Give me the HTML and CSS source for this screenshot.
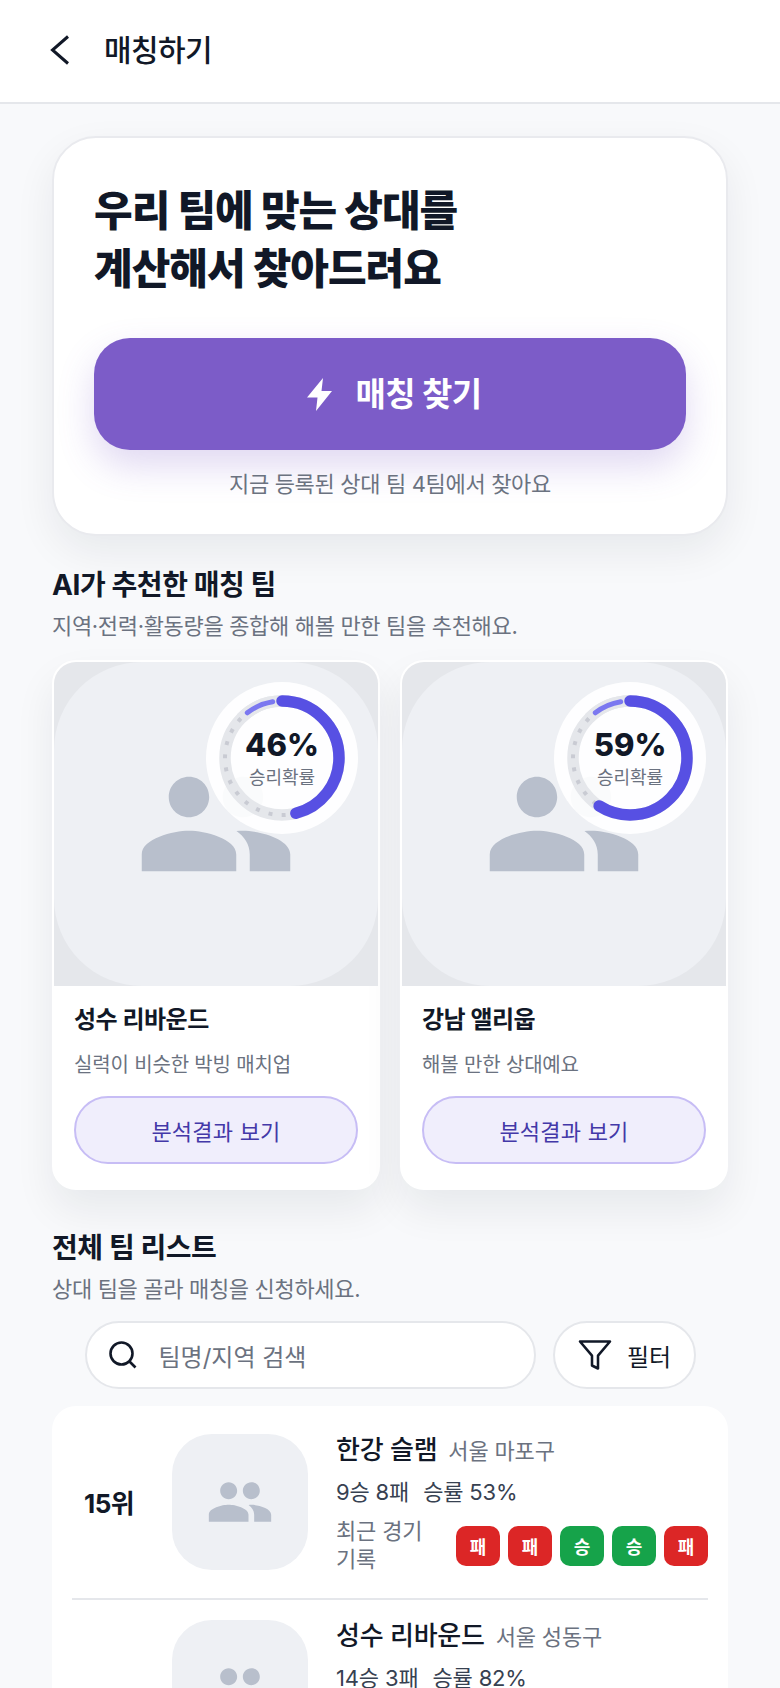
FILE: index.html
```html
<!DOCTYPE html>
<html lang="ko">
<head>
<meta charset="utf-8">
<title>매칭하기</title>
<link rel="stylesheet" href="styles.css">
</head>
<body>
<div class="app">
  <header class="topbar">
    <svg class="back-icon" viewBox="0 0 20 30" aria-hidden="true"><polyline points="18,1.5 2.5,15 18,28.5"/></svg>
    <h1 class="topbar-title">매칭하기</h1>
  </header>
  <main class="content">
    <section class="hero">
      <h2 class="hero-title">우리 팀에 맞는 상대를<br>계산해서 찾아드려요</h2>
      <button class="cta" type="button">
        <svg class="cta-icon" viewBox="0 0 25 33" aria-hidden="true"><polygon points="16,0 0,19.5 10.5,19.5 9,33 25,13 14.5,13"/></svg>
        <span>매칭 찾기</span>
      </button>
      <p class="hero-note">지금 등록된 상대 팀 4팀에서 찾아요</p>
    </section>

    <section class="section-recommend">
      <h2 class="section-title">AI가 추천한 매칭 팀</h2>
      <p class="section-sub">지역·전력·활동량을 종합해 해볼 만한 팀을 추천해요.</p>
      <div class="rec-grid">
        <article class="rec-card">
          <div class="rec-media">
            <div class="rec-plate">
              <svg class="group-icon" viewBox="0 0 24 24" aria-hidden="true"><path d="M16 11c1.66 0 2.99-1.34 2.99-3S17.66 5 16 5c-1.66 0-3 1.34-3 3s1.34 3 3 3zm-8 0c1.66 0 2.99-1.34 2.99-3S9.66 5 8 5C6.34 5 5 6.34 5 8s1.34 3 3 3zm0 2c-2.33 0-7 1.17-7 3.5V19h14v-2.5c0-2.33-4.67-3.5-7-3.5zm8 0c-.29 0-.62.02-.97.05 1.16.84 1.97 1.97 1.97 3.45V19h6v-2.5c0-2.33-4.67-3.5-7-3.5z"/></svg>
            </div>
            <div class="gauge">
              <svg class="gauge-svg" viewBox="0 0 152 152" aria-hidden="true">
                <circle class="g-track" cx="76" cy="76" r="57"/>
                <circle class="g-dots" cx="76" cy="76" r="57"/>
                <circle class="g-cover" cx="76" cy="76" r="57"/>
                <circle class="g-accent" cx="76" cy="76" r="57"/>
                <circle class="g-value g-46" cx="76" cy="76" r="57"/>
              </svg>
              <div class="gauge-text">
                <strong class="gauge-num">46%</strong>
                <span class="gauge-label">승리확률</span>
              </div>
            </div>
          </div>
          <div class="rec-body">
            <h3 class="rec-name">성수 리바운드</h3>
            <p class="rec-desc">실력이 비슷한 박빙 매치업</p>
            <button class="rec-btn" type="button">분석결과 보기</button>
          </div>
        </article>
        <article class="rec-card">
          <div class="rec-media">
            <div class="rec-plate">
              <svg class="group-icon" viewBox="0 0 24 24" aria-hidden="true"><path d="M16 11c1.66 0 2.99-1.34 2.99-3S17.66 5 16 5c-1.66 0-3 1.34-3 3s1.34 3 3 3zm-8 0c1.66 0 2.99-1.34 2.99-3S9.66 5 8 5C6.34 5 5 6.34 5 8s1.34 3 3 3zm0 2c-2.33 0-7 1.17-7 3.5V19h14v-2.5c0-2.33-4.67-3.5-7-3.5zm8 0c-.29 0-.62.02-.97.05 1.16.84 1.97 1.97 1.97 3.45V19h6v-2.5c0-2.33-4.67-3.5-7-3.5z"/></svg>
            </div>
            <div class="gauge">
              <svg class="gauge-svg" viewBox="0 0 152 152" aria-hidden="true">
                <circle class="g-track" cx="76" cy="76" r="57"/>
                <circle class="g-dots" cx="76" cy="76" r="57"/>
                <circle class="g-cover" cx="76" cy="76" r="57"/>
                <circle class="g-accent" cx="76" cy="76" r="57"/>
                <circle class="g-value g-59" cx="76" cy="76" r="57"/>
              </svg>
              <div class="gauge-text">
                <strong class="gauge-num">59%</strong>
                <span class="gauge-label">승리확률</span>
              </div>
            </div>
          </div>
          <div class="rec-body">
            <h3 class="rec-name">강남 앨리웁</h3>
            <p class="rec-desc">해볼 만한 상대예요</p>
            <button class="rec-btn" type="button">분석결과 보기</button>
          </div>
        </article>
      </div>
    </section>

    <section class="section-list">
      <h2 class="section-title">전체 팀 리스트</h2>
      <p class="section-sub">상대 팀을 골라 매칭을 신청하세요.</p>
      <div class="search-row">
        <div class="search-box">
          <svg class="search-icon" viewBox="0 0 28 28" aria-hidden="true"><circle cx="12.5" cy="12.5" r="11"/><line x1="20.5" y1="20.5" x2="26.5" y2="26.5"/></svg>
          <span class="search-placeholder">팀명/지역 검색</span>
        </div>
        <button class="filter-btn" type="button">
          <svg class="filter-icon" viewBox="0 0 24 24" aria-hidden="true"><polygon points="22 3 2 3 10 12.46 10 19 14 21 14 12.46 22 3"/></svg>
          <span>필터</span>
        </button>
      </div>
      <div class="team-panel">
        <div class="team-row">
          <div class="team-rank">15위</div>
          <div class="team-thumb"><svg class="team-icon" viewBox="0 0 24 24" aria-hidden="true"><path d="M16 11c1.66 0 2.99-1.34 2.99-3S17.66 5 16 5c-1.66 0-3 1.34-3 3s1.34 3 3 3zm-8 0c1.66 0 2.99-1.34 2.99-3S9.66 5 8 5C6.34 5 5 6.34 5 8s1.34 3 3 3zm0 2c-2.33 0-7 1.17-7 3.5V19h14v-2.5c0-2.33-4.67-3.5-7-3.5zm8 0c-.29 0-.62.02-.97.05 1.16.84 1.97 1.97 1.97 3.45V19h6v-2.5c0-2.33-4.67-3.5-7-3.5z"/></svg></div>
          <div class="team-info">
            <div class="team-head"><span class="team-name">한강 슬램</span><span class="team-area">서울 마포구</span></div>
            <div class="team-stats"><span>9승 8패</span><span>승률 53%</span></div>
            <div class="team-recent">
              <span class="recent-label">최근 경기 기록</span>
              <div class="badges"><span class="badge lose">패</span><span class="badge lose">패</span><span class="badge win">승</span><span class="badge win">승</span><span class="badge lose">패</span></div>
            </div>
          </div>
        </div>
        <div class="team-row">
          <div class="team-rank"></div>
          <div class="team-thumb"><svg class="team-icon" viewBox="0 0 24 24" aria-hidden="true"><path d="M16 11c1.66 0 2.99-1.34 2.99-3S17.66 5 16 5c-1.66 0-3 1.34-3 3s1.34 3 3 3zm-8 0c1.66 0 2.99-1.34 2.99-3S9.66 5 8 5C6.34 5 5 6.34 5 8s1.34 3 3 3zm0 2c-2.33 0-7 1.17-7 3.5V19h14v-2.5c0-2.33-4.67-3.5-7-3.5zm8 0c-.29 0-.62.02-.97.05 1.16.84 1.97 1.97 1.97 3.45V19h6v-2.5c0-2.33-4.67-3.5-7-3.5z"/></svg></div>
          <div class="team-info">
            <div class="team-head"><span class="team-name">성수 리바운드</span><span class="team-area">서울 성동구</span></div>
            <div class="team-stats"><span>14승 3패</span><span>승률 82%</span></div>
          </div>
        </div>
      </div>
    </section>
  </main>
</div>
</body>
</html>
```

FILE: styles.css
```css
* { box-sizing: border-box; }
html, body { margin: 0; padding: 0; }
body {
  background: #f8f9fb;
  color: #111827;
  font-family: Inter, "Noto Sans CJK KR", sans-serif;
  letter-spacing: -0.01em;
}
h1, h2, h3, p { margin: 0; }
button { font-family: inherit; letter-spacing: inherit; cursor: pointer; }

.app { height: 100vh; overflow: hidden; }

.topbar {
  height: 104px;
  display: flex;
  align-items: center;
  gap: 34px;
  padding: 0 0 2px 50px;
  background: #fff;
  border-bottom: 2px solid #e5e7eb;
}
.back-icon { width: 20px; height: 30px; fill: none; stroke: #111827; stroke-width: 3; }
.topbar-title { font-size: 30px; font-weight: 500; letter-spacing: -0.02em; line-height: 1.2; }

.content { padding: 32px 52px 0; }

.hero {
  background: #fff;
  border: 2px solid #e9eaee;
  border-radius: 44px;
  padding: 44px 40px 0;
  height: 400px;
  box-shadow: 0 16px 40px rgba(17, 24, 39, 0.07);
}
.hero-title { font-size: 42px; font-weight: 800; line-height: 58px; letter-spacing: -0.024em; color: #111827; }
.cta {
  margin-top: 40px;
  width: 100%;
  height: 112px;
  display: flex;
  align-items: center;
  justify-content: center;
  gap: 24px;
  padding: 0 0 0 8px;
  border: 0;
  border-radius: 36px;
  background: #7c5cc8;
  color: #fff;
  font-size: 33px;
  font-weight: 700;
  letter-spacing: -0.02em;
  box-shadow: 0 16px 36px rgba(124, 92, 200, 0.24);
}
.cta span { margin-top: -4px; }
.cta-icon { width: 25px; height: 33px; fill: #fff; }
.hero-note { margin-top: 17px; text-align: center; font-size: 22px; line-height: 34px; letter-spacing: -0.015em; color: #6b7280; }

.section-recommend { margin-top: 30px; }
.section-title { font-size: 28px; font-weight: 700; line-height: 38px; letter-spacing: -0.015em; color: #111827; }
.section-sub { margin-top: 6px; font-size: 22px; line-height: 32px; color: #6b7280; letter-spacing: -0.015em; }

.rec-grid { margin-top: 18px; display: grid; grid-template-columns: 1fr 1fr; gap: 20px; }
.rec-card {
  background: #fff;
  border: 2px solid #fff;
  border-radius: 24px;
  height: 530px;
  box-shadow: 0 20px 40px rgba(17, 24, 39, 0.07);
  overflow: hidden;
}
.rec-media { position: relative; height: 324px; background: #e5e7eb; }
.rec-plate {
  height: 100%;
  display: flex;
  align-items: center;
  justify-content: center;
  background: #eef0f4;
  border-radius: 88px;
}
.group-icon { width: 162px; height: 162px; fill: #b8bfcc; }

.gauge {
  position: absolute;
  top: 20px;
  right: 20px;
  width: 152px;
  height: 152px;
  border-radius: 50%;
  background: rgba(255, 255, 255, 0.93);
}
.gauge-svg { position: absolute; inset: 0; width: 100%; height: 100%; transform: rotate(-90deg); fill: none; }
.g-track { stroke: #e5e7eb; stroke-width: 11.5; }
.g-dots { stroke: #c9cbd3; stroke-width: 4; stroke-dasharray: 4 9.264; stroke-dashoffset: -2.7; }
.g-cover { stroke: #e5e7eb; stroke-width: 11.5; stroke-dasharray: 48 310.1; stroke-dashoffset: 46; }
.g-accent { stroke: #7b78f0; stroke-width: 5; stroke-linecap: round; stroke-dasharray: 27.9 330.2; stroke-dashoffset: 37.8; }
.g-value { stroke: #5750e3; stroke-width: 11.5; stroke-linecap: round; }
.g-46 { stroke-dasharray: 164.7 358.1; }
.g-59 { stroke-dasharray: 211.3 358.1; }
.gauge-text {
  position: absolute;
  inset: 0;
  display: flex;
  flex-direction: column;
  align-items: center;
  justify-content: center;
}
.gauge-num { font-size: 31px; font-weight: 800; line-height: 38px; letter-spacing: 0; color: #111827; }
.gauge-label { margin-top: 2px; font-size: 18px; line-height: 24px; letter-spacing: 0; color: #6b7280; }

.rec-body { padding: 16px 20px 0; }
.rec-name { font-size: 24px; font-weight: 700; line-height: 36px; letter-spacing: -0.02em; color: #111827; }
.rec-desc { margin-top: 12px; font-size: 20px; line-height: 30px; color: #6b7280; }
.rec-btn {
  margin-top: 16px;
  width: 100%;
  height: 68px;
  background: #f0eefc;
  border: 2px solid #c7bdf5;
  border-radius: 34px;
  color: #4338a8;
  font-size: 22px;
  font-weight: 400;
  letter-spacing: 0.01em;
}

.section-list { margin-top: 39px; }
.search-row { margin-top: 16px; display: flex; justify-content: center; align-items: center; gap: 17px; }
.search-box {
  width: 451px;
  height: 68px;
  display: flex;
  align-items: center;
  gap: 22px;
  padding-left: 22px;
  background: #fff;
  border: 2px solid #e5e7eb;
  border-radius: 34px;
}
.search-icon { width: 28px; height: 28px; fill: none; stroke: #111827; stroke-width: 2.6; }
.search-placeholder { font-size: 24px; letter-spacing: 0; color: #6b7280; }
.filter-btn {
  width: 143px;
  height: 68px;
  display: flex;
  align-items: center;
  justify-content: center;
  gap: 14px;
  background: #fff;
  border: 2px solid #e5e7eb;
  border-radius: 34px;
  color: #111827;
  font-size: 24px;
}
.filter-icon { width: 36px; height: 36px; fill: none; stroke: #111827; stroke-width: 1.7; stroke-linejoin: round; }

.team-panel { margin-top: 17px; padding: 8px 20px; background: #fff; border-radius: 24px; }
.team-row {
  display: grid;
  grid-template-columns: 100px 136px 1fr;
  column-gap: 0;
  padding: 20px 0 25px;
  border-bottom: 2px solid #e5e7eb;
}
.team-row:last-child { border-bottom: 0; }
.team-rank { padding-left: 12px; margin-bottom: 4px; align-self: center; font-size: 26px; font-weight: 700; letter-spacing: -0.02em; color: #111827; }
.team-thumb {
  width: 136px;
  height: 136px;
  display: flex;
  align-items: center;
  justify-content: center;
  background: #eef0f4;
  border-radius: 40px;
}
.team-icon { width: 68px; height: 68px; fill: #b8bfcc; }
.team-info { margin-left: 28px; min-width: 0; }
.team-head { display: flex; align-items: baseline; gap: 11px; height: 32px; line-height: 32px; }
.team-name { font-size: 26px; font-weight: 500; letter-spacing: -0.01em; color: #111827; }
.team-area { font-size: 22px; color: #6b7280; }
.team-stats { margin-top: 10px; display: flex; gap: 14px; font-size: 22px; line-height: 32px; color: #374151; }
.team-recent { margin-top: 9px; display: flex; align-items: center; }
.recent-label { flex: 1; font-size: 22px; line-height: 28px; color: #6b7280; word-break: keep-all; }
.badges { display: flex; gap: 8px; flex: none; margin-top: 2px; }
.badge {
  width: 44px;
  height: 40px;
  display: flex;
  align-items: center;
  justify-content: center;
  border-radius: 10px;
  color: #fff;
  font-size: 18px;
  font-weight: 700;
}
.badge.lose { background: #dc2626; }
.badge.win { background: #16a34a; }
```
